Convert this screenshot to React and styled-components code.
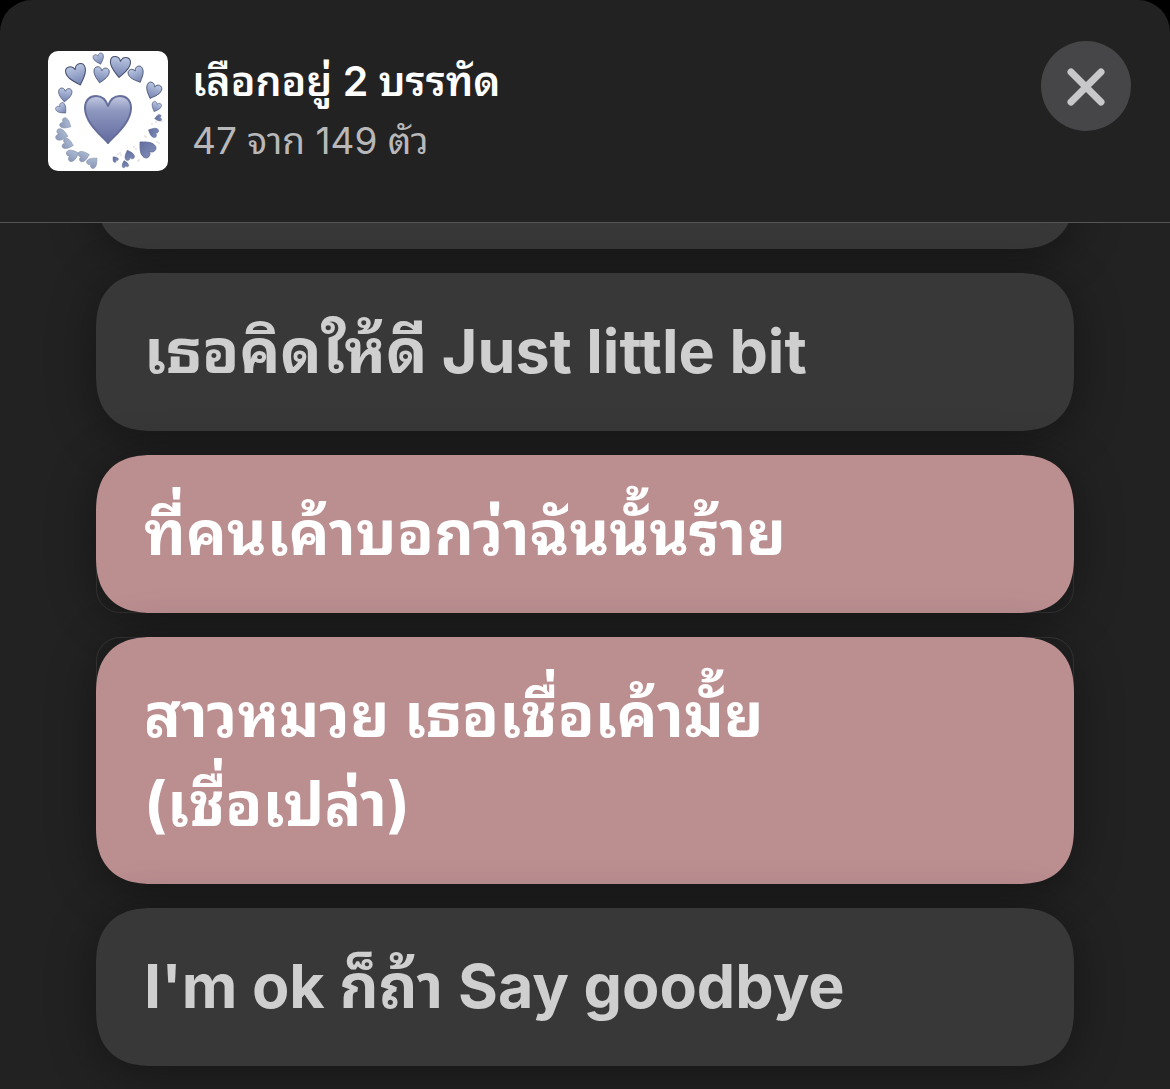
import React from "react";
import styled, { createGlobalStyle } from "styled-components";

const Global = createGlobalStyle`
  * { box-sizing: border-box; }
  html, body, #root { height: 100%; }
  body { margin: 0; background: #000; font-family: Inter, "Noto Sans Thai Looped", "Noto Sans Thai", "Noto Sans", sans-serif; }
`;

const Sheet = styled.main`
  display: flex;
  flex-direction: column;
  height: 100%;
  overflow: hidden;
  color: #fff;
  background: #222;
  border-radius: 32px 32px 0 0;
`;

const Header = styled.header`
  display: flex;
  align-items: flex-start;
  flex: none;
  gap: 24px;
  padding: 41px 39px 51px 48px;
  border-bottom: 1px solid #555;
`;

const Cover = styled.svg`
  flex: none;
  width: 120px;
  height: 120px;
  margin-top: 10px;
  border-radius: 10px;
  background: #fff;
`;

const Info = styled.div`
  flex: 1;
  min-width: 0;
  padding-top: 10px;
`;

const Title = styled.h1`
  margin: 0;
  font-size: 41px;
  font-weight: 600;
  line-height: 60px;
`;

const Count = styled.p`
  margin: 0;
  font-size: 37px;
  line-height: 60px;
  color: #b8b8bb;
`;

const Close = styled.button`
  display: grid;
  place-items: center;
  flex: none;
  width: 90px;
  height: 90px;
  padding: 0;
  border: 0;
  border-radius: 50%;
  background: #464648;
`;

const Viewport = styled.section`
  flex: 1;
  min-height: 0;
  overflow: hidden;
`;

const Lines = styled.div`
  position: relative;
  z-index: 0;
  display: flex;
  flex-direction: column;
  gap: 24px;
  margin-top: -132px;
  padding: 0 96px;
`;

const Line = styled.button`
  position: relative;
  flex: none;
  min-height: 158px;
  padding: 34px 48px 35px;
  border: 0;
  border-radius: 50px;
  background: ${(p) => (p["aria-pressed"] ? "#bb8e90" : "#383838")};
  color: ${(p) => (p["aria-pressed"] ? "#fff" : "#cfcfcf")};
  box-shadow: 0 6px 48px rgba(0, 0, 0, 0.4);
  font-family: inherit;
  font-size: 61px;
  font-weight: 700;
  line-height: 89px;
  text-align: left;
  white-space: pre-line;

  @supports (corner-shape: squircle) {
    border-radius: 57px;
    corner-shape: superellipse(1.3);
  }

  &::before {
    content: "";
    display: ${(p) => (p.$join ? "block" : "none")};
    position: absolute;
    z-index: -1;
    inset: ${(p) => (p.$join === "below" ? "50% 0 0" : "0 0 50%")};
    border: 1px solid #383838;
    border-radius: ${(p) => (p.$join === "below" ? "0 0 24px 24px" : "24px 24px 0 0")};
  }
`;

const lines = [
  { text: "เธอคิดให้ดี Just little bit" },
  { text: "ที่คนเค้าบอกว่าฉันนั้นร้าย", selected: true, join: "below" },
  { text: "สาวหมวย เธอเชื่อเค้ามั้ย\n(เชื่อเปล่า)", selected: true, join: "above" },
  { text: "I'm ok ก็ถ้า Say goodbye" },
];

/* Each heart: centre x, centre y, width, rotation, tone */
const hearts = [
  [60, 68, 48, 0, "deep"],
  [51, 8, 11, -18, "edge"],
  [72, 16, 21, 5, "edge"],
  [29, 24, 21, -18, "edge"],
  [53, 24, 16, 10, "edge"],
  [89, 24, 16, -24, "edge"],
  [105, 40, 16, 22, "edge"],
  [17, 44, 14, 5, "edge"],
  [14, 58, 11, -42, "edge"],
  [108, 56, 10, 22, "edge"],
  [110, 67, 7, 80, "dark"],
  [18, 73, 11, -60, "pale"],
  [14, 84, 12, -78, "pale"],
  [20, 93, 11, -75, "pale"],
  [25, 104, 12, -110, "pale"],
  [36, 105, 11, -105, "pale"],
  [45, 111, 11, -135, "pale"],
  [105, 81, 10, 115, "dark"],
  [98, 97, 17, 135, "dark"],
  [81, 104, 10, 160, "dark"],
  [67, 108, 6, 140, "dark"],
  [77, 113, 7, 165, "dark"],
];

const sparkles = [
  [104, 73], [108, 71], [114, 70], [98, 86], [97, 85], [109, 91], [111, 92],
  [86, 96], [88, 98], [72, 102], [70, 103], [91, 109], [90, 110], [73, 104],
];

const strokes = { deep: "#666f9c", dark: "#5e6994", edge: "#46506f", pale: "#8391a8" };

function Hearts() {
  return (
    <Cover viewBox="0 0 120 120" role="img" aria-label="หัวใจ">
      <defs>
        <linearGradient id="deep" x1="0" y1="0" x2="0" y2="1">
          <stop offset="0" stopColor="#c3cae2" />
          <stop offset="0.3" stopColor="#8f98c0" />
          <stop offset="1" stopColor="#626b9e" />
        </linearGradient>
        <linearGradient id="dark" x1="0" y1="0" x2="0" y2="1">
          <stop offset="0" stopColor="#7b88b4" />
          <stop offset="1" stopColor="#626e9f" />
        </linearGradient>
        <linearGradient id="edge" x1="0" y1="0" x2="0" y2="1">
          <stop offset="0" stopColor="#b9c6e2" />
          <stop offset="1" stopColor="#7482b0" />
        </linearGradient>
        <linearGradient id="pale" x1="0" y1="0" x2="1" y2="1">
          <stop offset="0" stopColor="#8793b6" />
          <stop offset="1" stopColor="#b5c5da" />
        </linearGradient>
      </defs>
      {hearts.map(([x, y, w, r, tone], i) => (
        <path
          key={i}
          transform={`translate(${x} ${y}) rotate(${r}) scale(${w / 48})`}
          d="M0 24C-6 17 -23 4 -23 -11C-23 -19 -18 -23 -12 -23C-6 -23 -2 -19 0 -13C2 -19 6 -23 12 -23C18 -23 23 -19 23 -11C23 4 6 17 0 24Z"
          fill={`url(#${tone})`}
          stroke={strokes[tone]}
          strokeWidth={w > 40 ? 2 : 2.4}
          strokeLinejoin="round"
        />
      ))}
      {sparkles.map(([x, y], i) => (
        <circle key={i} cx={x} cy={y} r="0.8" fill="#d3d0d0" />
      ))}
    </Cover>
  );
}

export default function App() {
  return (
    <>
      <Global />
      <Sheet>
        <Header>
          <Hearts />
          <Info>
            <Title>เลือกอยู่ 2 บรรทัด</Title>
            <Count>47 จาก 149 ตัว</Count>
          </Info>
          <Close aria-label="ปิด">
            <svg width="40" height="40" viewBox="0 0 40 40" fill="none" stroke="#c8c8ca" strokeWidth="7" strokeLinecap="round">
              <path d="M5 6 35 36M35 6 5 36" />
            </svg>
          </Close>
        </Header>
        <Viewport>
          <Lines>
            <Line as="div" />
            {lines.map((l) => (
              <Line key={l.text} aria-pressed={!!l.selected} $join={l.join}>
                {l.text}
              </Line>
            ))}
          </Lines>
        </Viewport>
      </Sheet>
    </>
  );
}
